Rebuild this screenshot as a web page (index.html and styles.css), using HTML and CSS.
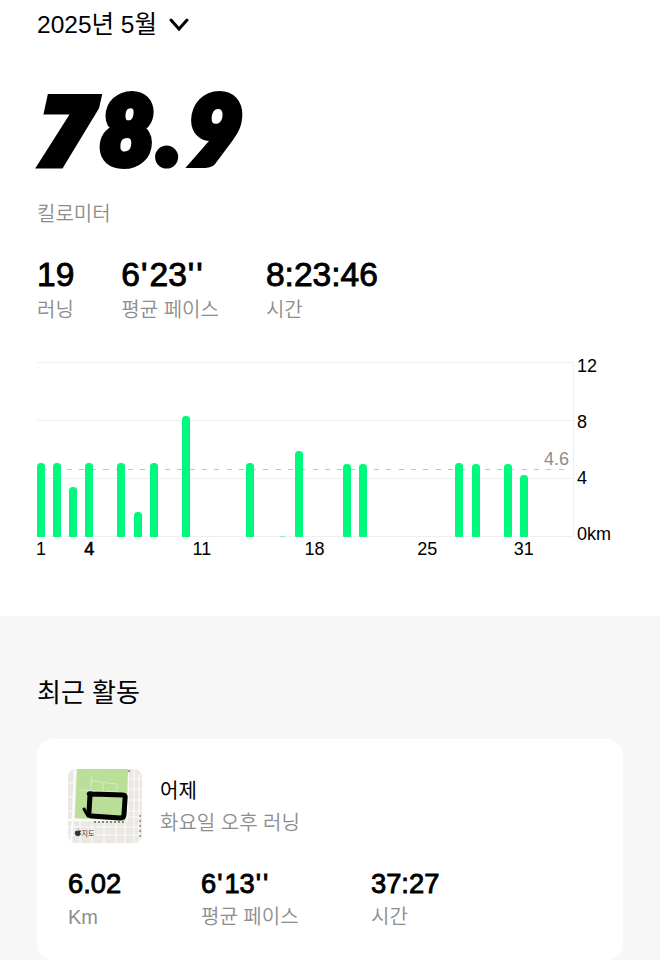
FILE: index.html
```html
<!DOCTYPE html>
<html lang="ko">
  <head>
    <meta charset="UTF-8" />
    <title>러닝 활동</title>
    <link rel="stylesheet" href="styles.css">
  </head>
  <body>
    <main class="summary">
      <div class="month">
        <span>2025년 5월</span>
        <svg class="chevron" viewBox="0 0 20 14" width="20" height="14">
          <path d="M2 2 L10 11 L18 2" fill="none" stroke="#000" stroke-width="3" stroke-linecap="round" />
        </svg>
      </div>

      <h1>
        <svg class="distance" viewBox="0 0 220 80" width="220" height="80">
          <text><tspan class="seven" x="1" y="73.5">7</tspan><tspan x="63 121 151" y="72">8.9</tspan></text>
        </svg>
      </h1>
      <p class="unit">킬로미터</p>

      <div class="stats">
        <div class="stat"><strong>19</strong><span>러닝</span></div>
        <div class="stat"><strong>6<b>'</b>23<b>''</b></strong><span>평균 페이스</span></div>
        <div class="stat"><strong>8:23:46</strong><span>시간</span></div>
      </div>

      <div class="chart">
        <div class="plot">
          <div class="average"><span>4.6</span></div>
          <div class="bars">
            <i style="grid-column: 1; height: 74px"></i>
            <i style="grid-column: 2; height: 74px"></i>
            <i style="grid-column: 3; height: 50px"></i>
            <i style="grid-column: 4; height: 74px"></i>
            <i style="grid-column: 6; height: 74px"></i>
            <i style="grid-column: 7; height: 25px"></i>
            <i style="grid-column: 8; height: 74px"></i>
            <i style="grid-column: 10; height: 121px"></i>
            <i style="grid-column: 14; height: 74px"></i>
            <i class="tiny" style="grid-column: 16; height: 1px"></i>
            <i style="grid-column: 17; height: 86px"></i>
            <i style="grid-column: 20; height: 73px"></i>
            <i style="grid-column: 21; height: 73px"></i>
            <i style="grid-column: 27; height: 74px"></i>
            <i style="grid-column: 28; height: 73px"></i>
            <i style="grid-column: 30; height: 73px"></i>
            <i style="grid-column: 31; height: 62px"></i>
          </div>
        </div>
        <div class="y-axis">
          <span>12</span><span>8</span><span>4</span><span>0km</span>
        </div>
        <div class="x-axis">
          <span style="grid-column: 1">1</span>
          <span class="today" style="grid-column: 4">4</span>
          <span style="grid-column: 11">11</span>
          <span style="grid-column: 18">18</span>
          <span style="grid-column: 25">25</span>
          <span style="grid-column: 31">31</span>
        </div>
      </div>
    </main>

    <section class="recent">
      <h2>최근 활동</h2>
      <article class="card">
        <div class="run">
          <svg class="map" viewBox="0 0 74 74" width="74" height="74">
            <rect width="74" height="74" fill="#ebe8e4" />
            <g fill="none" stroke="#fafafa" stroke-width="1.2">
              <path d="M60 10h14M60 20h14M60 31h14M60 42h14M58 48h16M0 58h74M0 66h74M66 0v74M71 5v69M12 52v22M24 54v20M36 54v20M48 54v20M57 52v22M0 14h8M0 28h8M0 42h8" />
              <path d="M7 0L5 50L3 74M60 0L59 51L0 51" stroke-width="2.4" />
            </g>
            <path d="M9 0H60L59 45L57 52L7 49Z" fill="#b9df98" />
            <path d="M24 7l-2 16M11 21l39 2M24 12l25 3v12M35 14v12M27 3h2" fill="none" stroke="#d3edbd" stroke-width="1" />
            <path d="M60 2h3M72 46v24" stroke="#777" stroke-width="1.3" stroke-dasharray="2 3" />
            <path d="M26 53h30" stroke="#888" stroke-width="2" stroke-dasharray="2 2" />
            <path d="M22 26Q20 24 24 25L55 26Q58 26 57 30L56 45Q56 49 52 49L24 47Q20 47 21 43Z" fill="none" stroke="#000" stroke-width="5" stroke-linejoin="round" />
            <path d="M16 40l4 7" stroke="#000" stroke-width="3" stroke-linecap="round" />
            <path d="M10 62q-3-1-3 2t3 3q2 0 3-2q-2-1 0-3q-1-1-3 0M10 61q0-1 1-2" fill="#333" stroke="#333" stroke-width=".3" />
            <text class="map-label" x="13.5" y="67">지도</text>
          </svg>
          <div class="run-title">
            <h3>어제</h3>
            <p>화요일 오후 러닝</p>
          </div>
        </div>
        <div class="run-stats">
          <div class="stat"><strong>6.02</strong><span>Km</span></div>
          <div class="stat"><strong>6<b>'</b>13<b>''</b></strong><span>평균 페이스</span></div>
          <div class="stat"><strong>37:27</strong><span>시간</span></div>
        </div>
      </article>
    </section>
  </body>
</html>
```
FILE: styles.css
```css
* {
  box-sizing: border-box;
}

body {
  font-family: "Liberation Sans", "Noto Sans CJK KR", sans-serif;
  margin: 0;
  height: 960px;
  overflow: hidden;
  background: #fff;
  color: #000;
}

h1,
h2,
h3,
p {
  margin: 0;
  font-weight: normal;
}

.summary {
  height: 616px;
  padding: 7px 37px 0;
}

.month {
  display: flex;
  align-items: center;
  gap: 12px;
  height: 30px;
  font-size: 24.5px;
}

.chevron {
  margin-top: 6px;
}

h1 {
  height: 80px;
  margin-top: 55px;
}

.distance {
  display: block;
  overflow: visible;
}

.distance text {
  font-family: Lato, sans-serif;
  font-size: 93px;
  font-weight: 900;
  font-style: italic;
  stroke: #000;
  stroke-width: 8px;
  stroke-linejoin: miter;
}

.distance .seven {
  font-family: "Open Sans", sans-serif;
  font-size: 98px;
  font-weight: 800;
  stroke-width: 5px;
}

.unit {
  margin-top: 28px;
  font-size: 20px;
  font-weight: 350;
  line-height: 28px;
  color: #8d8d8d;
}

.stats {
  display: flex;
  margin-top: 29px;
}

.stats .stat {
  margin-right: 47px;
}

.stat {
  display: flex;
  flex-direction: column;
}

.stat strong {
  font-size: 33.6px;
  font-weight: normal;
  line-height: 36px;
  -webkit-text-stroke: 0.9px #000;
}

.stat b {
  padding-left: 1px;
  font-weight: normal;
  letter-spacing: 2px;
}

.stat span {
  font-size: 20px;
  font-weight: 350;
  line-height: 34px;
  color: #8d8d8d;
}

.chart {
  display: grid;
  grid-template-columns: 537px 1fr;
  grid-template-rows: 175px 24px;
  margin-top: 35px;
  font-size: 18px;
}

.plot {
  position: relative;
  display: flex;
  align-items: flex-end;
  border-right: 1px solid #efefef;
  background: repeating-linear-gradient(#efefef 0 1px, transparent 1px 58px);
}

.bars,
.x-axis {
  display: grid;
  grid-template-columns: repeat(31, 8px);
  column-gap: 8.1px;
}

.bars {
  position: relative;
  align-items: end;
}

.bars i {
  grid-row: 1;
  border-radius: 3.5px 3.5px 1px 1px;
  background: #00f97c;
}

.bars .tiny {
  width: 5px;
  justify-self: center;
  opacity: 0.5;
}

.average {
  position: absolute;
  top: 107px;
  left: 5px;
  right: 2px;
  height: 1px;
  background: repeating-linear-gradient(to right, #c2c2c2 0 5px, transparent 5px 12.3px);
}

.average span {
  position: absolute;
  right: 2px;
  bottom: 2px;
  line-height: 18px;
  color: #8d8d8d;
}

.y-axis {
  display: flex;
  flex-direction: column;
  gap: 36px;
  margin: -6px 0 0 3px;
  line-height: 20px;
}

.x-axis span {
  grid-row: 1;
  justify-self: center;
  line-height: 24px;
}

.x-axis .today {
  -webkit-text-stroke: 0.6px #000;
}

.recent {
  height: 344px;
  padding: 59px 37px 0;
  background: #f7f7f7;
}

.recent h2 {
  font-size: 26px;
  line-height: 36px;
}

.card {
  height: 221px;
  margin-top: 28px;
  padding: 30px 31px 0;
  border-radius: 16px;
  background: #fff;
}

.run {
  display: flex;
  align-items: center;
  gap: 18px;
}

.map {
  border-radius: 8px;
}

.map-label {
  font-size: 7px;
  fill: #333;
}

.run-title {
  padding-top: 2px;
  font-size: 20px;
  line-height: 32px;
}

.run-title h3 {
  font-size: 20px;
}

.run-title p {
  font-weight: 350;
  color: #8d8d8d;
}

.run-stats {
  display: grid;
  grid-template-columns: 133px 170px 1fr;
  margin-top: 24px;
}

.run-stats strong {
  font-size: 27.3px;
  line-height: 33px;
}
```
